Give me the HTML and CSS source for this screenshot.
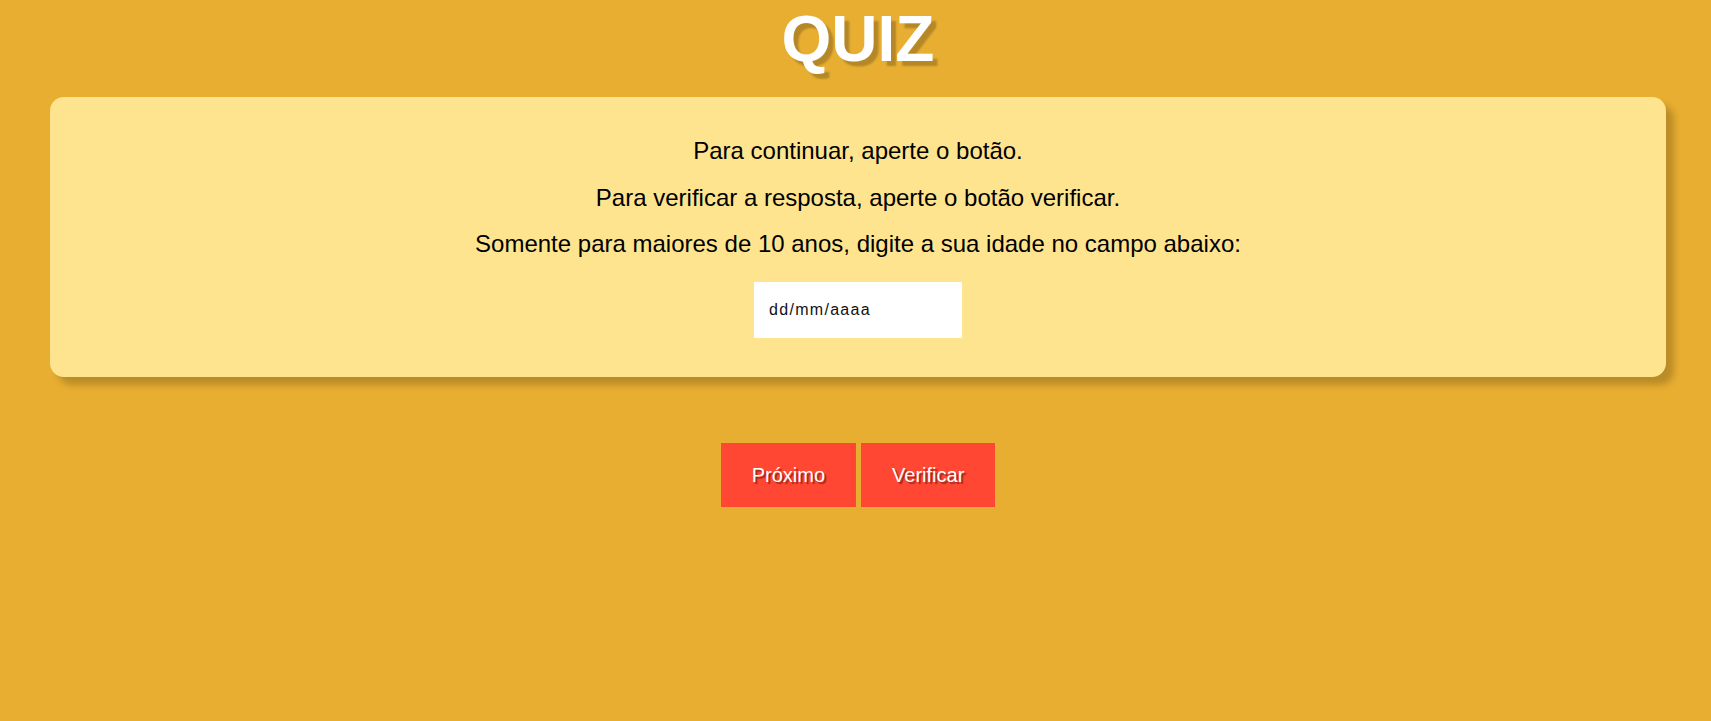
FILE: index.html
```html
<!DOCTYPE html>
<html lang="pt-BR">
<head>
<meta charset="utf-8">
<title>Quiz</title>
<link rel="stylesheet" href="styles.css">
</head>
<body>
<main class="page">
  <h1 class="title">QUIZ</h1>
  <section class="card">
    <p class="line">Para continuar, aperte o botão.</p>
    <p class="line">Para verificar a resposta, aperte o botão verificar.</p>
    <p class="line">Somente para maiores de 10 anos, digite a sua idade no campo abaixo:</p>
    <input class="age" type="text" placeholder="dd/mm/aaaa">
  </section>
  <div class="actions">
    <button class="btn" type="button">Próximo</button>
    <button class="btn" type="button">Verificar</button>
  </div>
</main>
</body>
</html>
```

FILE: styles.css
```css
html, body {
  margin: 0;
  padding: 0;
}
body {
  background: #e8ae31;
  font-family: "Liberation Sans", Arial, sans-serif;
  min-height: 721px;
}
.page {
  padding: 2px 45px 0 50px;
  display: flex;
  flex-direction: column;
  align-items: stretch;
}
.title {
  margin: 0;
  text-align: center;
  font-size: 64px;
  line-height: 74px;
  font-weight: bold;
  color: #ffffff;
  text-shadow: 5px 5px 2px rgba(0, 0, 0, 0.22);
}
.card {
  margin-top: 21px;
  background: #ffe48f;
  border-radius: 14px;
  box-shadow: 8px 8px 7px rgba(0, 0, 0, 0.2);
  padding: 40px 20px 39px;
  display: flex;
  flex-direction: column;
  align-items: center;
  gap: 19.5px;
}
.line {
  margin: 0;
  font-size: 24px;
  line-height: 27px;
  color: #000;
  text-align: center;
}
.age {
  margin-top: 5.5px;
  width: 208px;
  height: 56px;
  box-sizing: border-box;
  border: none;
  outline: none;
  background: #fff;
  padding: 0 15px;
  font-family: "Liberation Sans", Arial, sans-serif;
  font-size: 16px;
  letter-spacing: 1.3px;
  color: #111;
}
.age::placeholder {
  color: #111;
  opacity: 1;
}
.actions {
  margin-top: 66px;
  display: flex;
  justify-content: center;
  gap: 5px;
}
.btn {
  border: none;
  background: #ff4733;
  color: #fff;
  font-family: "Liberation Sans", Arial, sans-serif;
  font-size: 20px;
  line-height: 23px;
  height: 64px;
  padding: 0 31px;
  text-shadow: 2px 2px 1px rgba(90, 20, 10, 0.6);
  cursor: pointer;
}
```
